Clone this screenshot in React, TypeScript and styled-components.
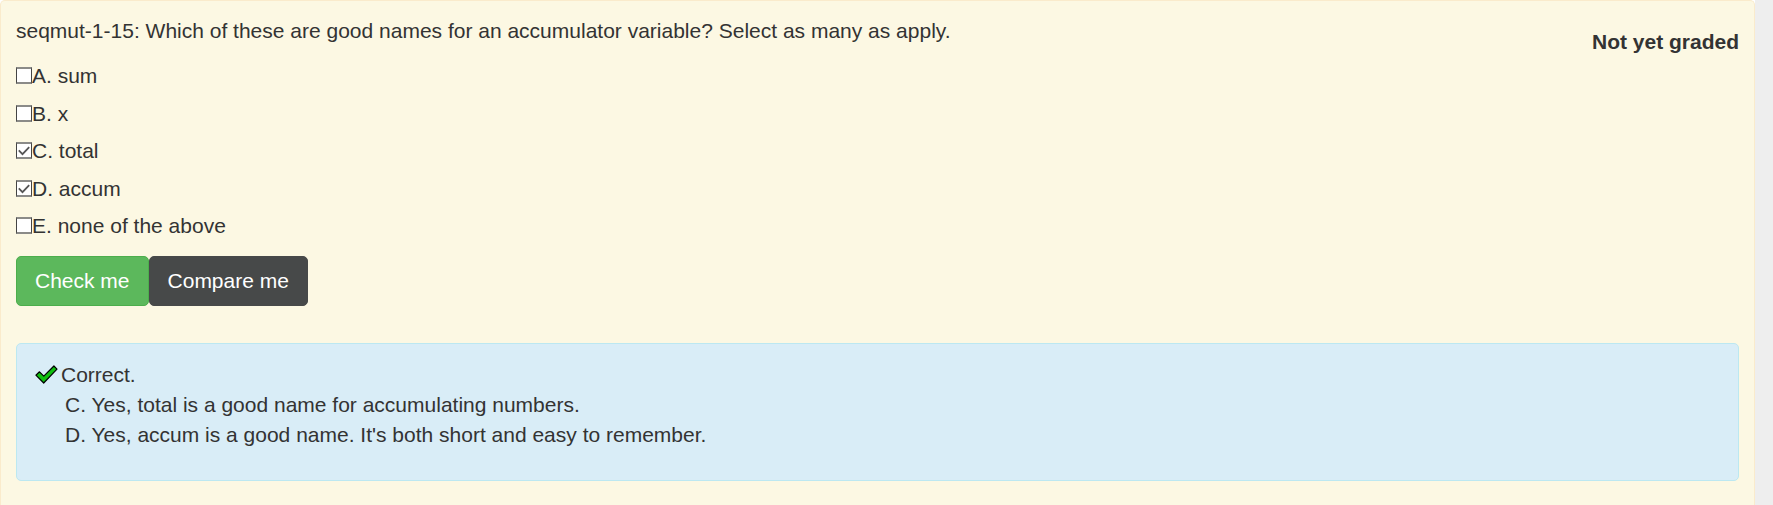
import React, { useState } from 'react';
import styled, { createGlobalStyle } from 'styled-components';

const GlobalStyle = createGlobalStyle`
  *, *::before, *::after { box-sizing: border-box; }
  html { background: #fff; }
  body {
    margin: 0;
    color: #333;
    font: 21px/30px Arial, "Liberation Sans", sans-serif;
  }
`;

const Page = styled.div`
  display: flex;
  min-height: 100vh;
`;

const Gutter = styled.div`
  flex: 0 0 18px;
  background: #eee;
`;

const Card = styled.main`
  flex: 1;
  min-width: 0;
  padding: 15px 15px 24px;
  border: 1px solid #faebcc;
  border-bottom: 0;
  border-radius: 5px 5px 0 0;
  background: #fcf8e3;
`;

const Header = styled.header`
  display: flex;
  justify-content: space-between;
  align-items: flex-start;
  gap: 24px;
`;

const Question = styled.p`
  margin: 0;
`;

const Grade = styled.strong`
  margin-top: 11px;
  white-space: nowrap;
`;

const Options = styled.div`
  display: flex;
  flex-direction: column;
  align-items: flex-start;
  justify-content: space-between;
  min-height: 199px;
  padding: 4px 0 15px;
`;

const Option = styled.label`
  display: flex;
  align-items: flex-start;
`;

const Box = styled.span`
  display: grid;
  width: 16px;
  height: 17px;
  margin-top: 6px;
  > * { grid-area: 1 / 1; }
`;

const BoxInput = styled.input`
  appearance: none;
  width: 16px;
  height: 17px;
  margin: 0;
  border: 1px solid #444;
  border-top: 2px solid #8b8b88;
  border-bottom: 2px solid #8b8b88;
  background: #fff;
`;

const BoxTick = styled.svg`
  width: 16px;
  height: 17px;
  pointer-events: none;
`;

const Actions = styled.div`
  display: flex;
`;

const Button = styled.button<{ $fill: string; $edge: string }>`
  padding: 9px 18px;
  border: 1px solid ${(p) => p.$edge};
  border-radius: 5px;
  background: ${(p) => p.$fill};
  color: #fff;
  font: inherit;
  cursor: pointer;
`;

const Feedback = styled.section`
  margin-top: 37px;
  padding: 16px 18px 30px;
  border: 1px solid #bce8f1;
  border-radius: 5px;
  background: #d9edf7;
`;

const Verdict = styled.div`
  display: flex;
  align-items: center;
  gap: 3px;
`;

const Comments = styled.ul`
  margin: 0;
  padding: 0 0 0 30px;
  list-style: none;
`;

const CorrectMark = () => (
  <svg width="23" height="20" viewBox="0 0 23 20" aria-hidden="true">
    <path
      d="M.9 10.2 4.5 6.8 8.8 11.2 18.9 1 22 4.1 8.7 18Z"
      fill="#10c010"
      stroke="#000"
      strokeWidth="1.2"
      strokeLinejoin="round"
    />
  </svg>
);

const options = ['sum', 'x', 'total', 'accum', 'none of the above'];

export default function App() {
  const [checked, setChecked] = useState([false, false, true, true, false]);
  const toggle = (i: number) => setChecked((c) => c.map((v, n) => (n === i ? !v : v)));

  return (
    <>
      <GlobalStyle />
      <Page>
        <Card>
          <Header>
            <Question id="question">
              seqmut-1-15: Which of these are good names for an accumulator variable? Select as many as apply.
            </Question>
            <Grade>Not yet graded</Grade>
          </Header>
          <Options role="group" aria-labelledby="question">
            {options.map((text, i) => (
              <Option key={text}>
                <Box>
                  <BoxInput type="checkbox" checked={checked[i]} onChange={() => toggle(i)} />
                  {checked[i] && (
                    <BoxTick viewBox="0 0 16 17" aria-hidden="true">
                      <path d="M2.8 8.4 6.5 12.1 13.2 5.2" fill="none" stroke="#555" strokeWidth="1.8" />
                    </BoxTick>
                  )}
                </Box>
                {`${'ABCDE'[i]}. ${text}`}
              </Option>
            ))}
          </Options>
          <Actions>
            <Button type="button" $fill="#5cb85c" $edge="#4cae4c">Check me</Button>
            <Button type="button" $fill="#474949" $edge="#474949">Compare me</Button>
          </Actions>
          <Feedback aria-live="polite">
            <Verdict>
              <CorrectMark />
              Correct.
            </Verdict>
            <Comments>
              <li>C. Yes, total is a good name for accumulating numbers.</li>
              <li>D. Yes, accum is a good name. It's both short and easy to remember.</li>
            </Comments>
          </Feedback>
        </Card>
        <Gutter />
      </Page>
    </>
  );
}
